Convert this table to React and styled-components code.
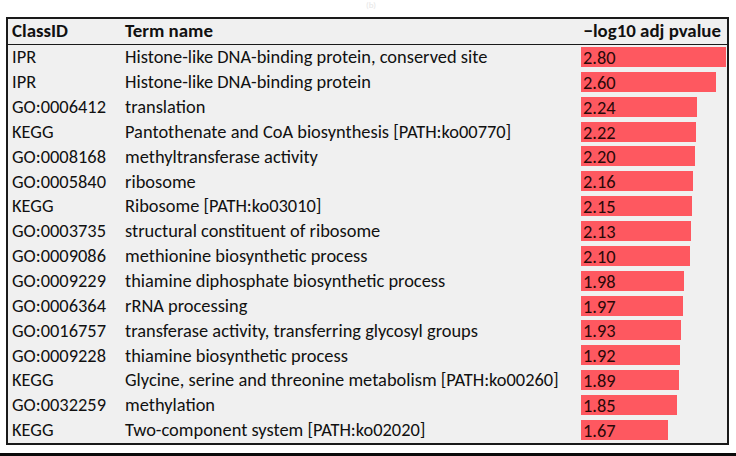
import React from 'react';
import styled, { createGlobalStyle } from 'styled-components';

const GlobalStyle = createGlobalStyle`
  html, body {
    margin: 0;
    padding: 0;
    background: #fff;
  }
  body {
    font-family: Carlito, Lato, "Open Sans", sans-serif;
    color: #111;
  }
`;

const Page = styled.div`
  width: 736px;
  height: 456px;
  overflow: hidden;
  display: flex;
  flex-direction: column;
`;

const Caption = styled.div`
  height: 17px;
  text-align: center;
  color: #e6e6e6;
  font-size: 9px;
  line-height: 9px;
  padding-left: 6px;
`;

const Table = styled.div`
  margin: 0 7px 0 6px;
  border: 2px solid #1a1a1a;
  background: #f0f0f0;
  font-size: 18.4px;
`;

const Row = styled.div`
  display: grid;
  grid-template-columns: 117px 456px 1fr;
  align-items: center;
  height: ${p => (p.$head ? '25px' : '24.87px')};
  border-bottom: ${p => (p.$head ? '1px solid #1a1a1a' : 'none')};
  font-weight: ${p => (p.$head ? 700 : 400)};
  font-size: ${p => (p.$head ? '18.9px' : 'inherit')};
  white-space: nowrap;
  line-height: 1;
`;

const ClassCell = styled.div`
  padding-left: 4px;
`;

const TermCell = styled.div``;

const ValueHead = styled.div`
  text-align: right;
  padding-right: 6px;
`;

const BarCell = styled.div`
  height: 100%;
  display: flex;
  align-items: center;
`;

const Bar = styled.div`
  height: 20px;
  background: #fe5860;
  color: #2a0808;
  padding-left: 2px;
  box-sizing: border-box;
  line-height: 21px;
  margin-top: -1px;
`;

const Rule = styled.div`
  margin-top: auto;
  height: 3px;
  background: #0a0a0a;
`;

const rows = [
  ['IPR', 'Histone-like DNA-binding protein, conserved site', 2.8],
  ['IPR', 'Histone-like DNA-binding protein', 2.6],
  ['GO:0006412', 'translation', 2.24],
  ['KEGG', 'Pantothenate and CoA biosynthesis [PATH:ko00770]', 2.22],
  ['GO:0008168', 'methyltransferase activity', 2.2],
  ['GO:0005840', 'ribosome', 2.16],
  ['KEGG', 'Ribosome [PATH:ko03010]', 2.15],
  ['GO:0003735', 'structural constituent of ribosome', 2.13],
  ['GO:0009086', 'methionine biosynthetic process', 2.1],
  ['GO:0009229', 'thiamine diphosphate biosynthetic process', 1.98],
  ['GO:0006364', 'rRNA processing', 1.97],
  ['GO:0016757', 'transferase activity, transferring glycosyl groups', 1.93],
  ['GO:0009228', 'thiamine biosynthetic process', 1.92],
  ['KEGG', 'Glycine, serine and threonine metabolism [PATH:ko00260]', 1.89],
  ['GO:0032259', 'methylation', 1.85],
  ['KEGG', 'Two-component system [PATH:ko02020]', 1.67],
];

const PX_PER_UNIT = 51.8;

export default function App() {
  return (
    <Page>
      <GlobalStyle />
      <Caption>(b)</Caption>
      <Table>
        <Row $head>
          <ClassCell>ClassID</ClassCell>
          <TermCell>Term name</TermCell>
          <ValueHead>−log10 adj pvalue</ValueHead>
        </Row>
        {rows.map(([id, term, v], i) => (
          <Row key={i}>
            <ClassCell>{id}</ClassCell>
            <TermCell>{term}</TermCell>
            <BarCell>
              <Bar style={{ width: v * PX_PER_UNIT }}>{v.toFixed(2)}</Bar>
            </BarCell>
          </Row>
        ))}
      </Table>
      <Rule />
    </Page>
  );
}
